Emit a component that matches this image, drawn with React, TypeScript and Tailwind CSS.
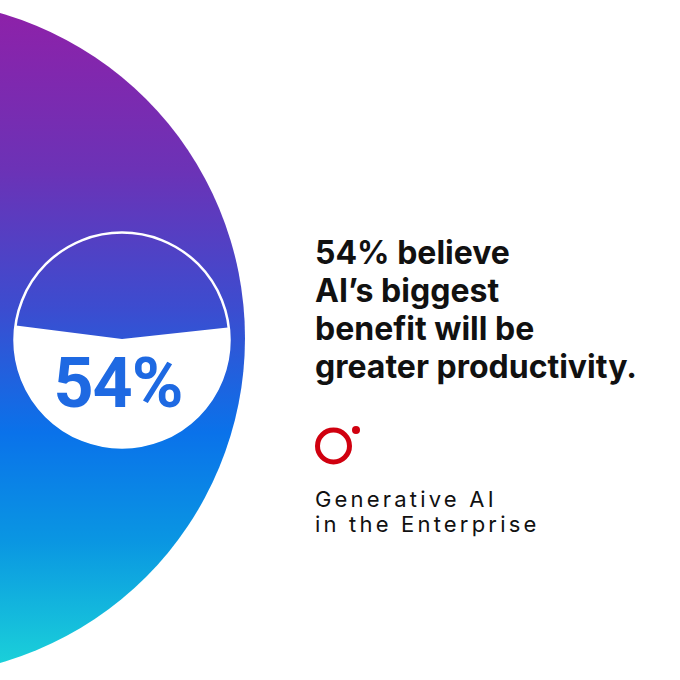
export default function App() {
  return (
    <div className="w-[680px] h-[680px] bg-white flex overflow-hidden font-['Inter',sans-serif]">
      <div className="w-[676px] h-[676px] shrink-0 -ml-[431px] rounded-full bg-[linear-gradient(180deg,#9020a8_0%,#6c32b6_25%,#3b4dd0_46%,#0a72ea_64%,#0a96e2_80%,#1cd6d8_100%)] flex items-center justify-end pr-[13px] pt-[4px]">
        <svg width="220" height="220" viewBox="0 0 220 220">
          <defs>
            <clipPath id="liquid">
              <circle cx="110" cy="110" r="108" />
            </clipPath>
          </defs>
          <polygon points="0,95 110,109 220,97 220,220 0,220" fill="#fff" clipPath="url(#liquid)" />
          <circle cx="110" cy="110" r="107.5" fill="none" stroke="#fff" strokeWidth="2.5" />
          <text x="106" y="177" textAnchor="middle" fill="#1e69e2" fontFamily="Roboto, sans-serif" fontWeight="700" fontSize="70" letterSpacing="-1">
            54%
          </text>
        </svg>
      </div>
      <div className="flex flex-col pl-[70px] pt-[234px]">
        <h1 className="text-[32px] leading-[38px] font-bold text-[#111]">
          54% believe
          <br />
          AI’s biggest
          <br />
          benefit will be
          <br />
          greater productivity.
        </h1>
        <svg className="mt-[39px]" width="46" height="40" viewBox="0 0 46 40">
          <circle cx="18.5" cy="21" r="16" fill="none" stroke="#d0000f" strokeWidth="5" />
          <circle cx="41" cy="5" r="4" fill="#d0000f" />
        </svg>
        <p className="mt-[22px] text-[22px] leading-[25px] tracking-[0.145em] text-[#111]">
          Generative AI
          <br />
          in the Enterprise
        </p>
      </div>
    </div>
  );
}
